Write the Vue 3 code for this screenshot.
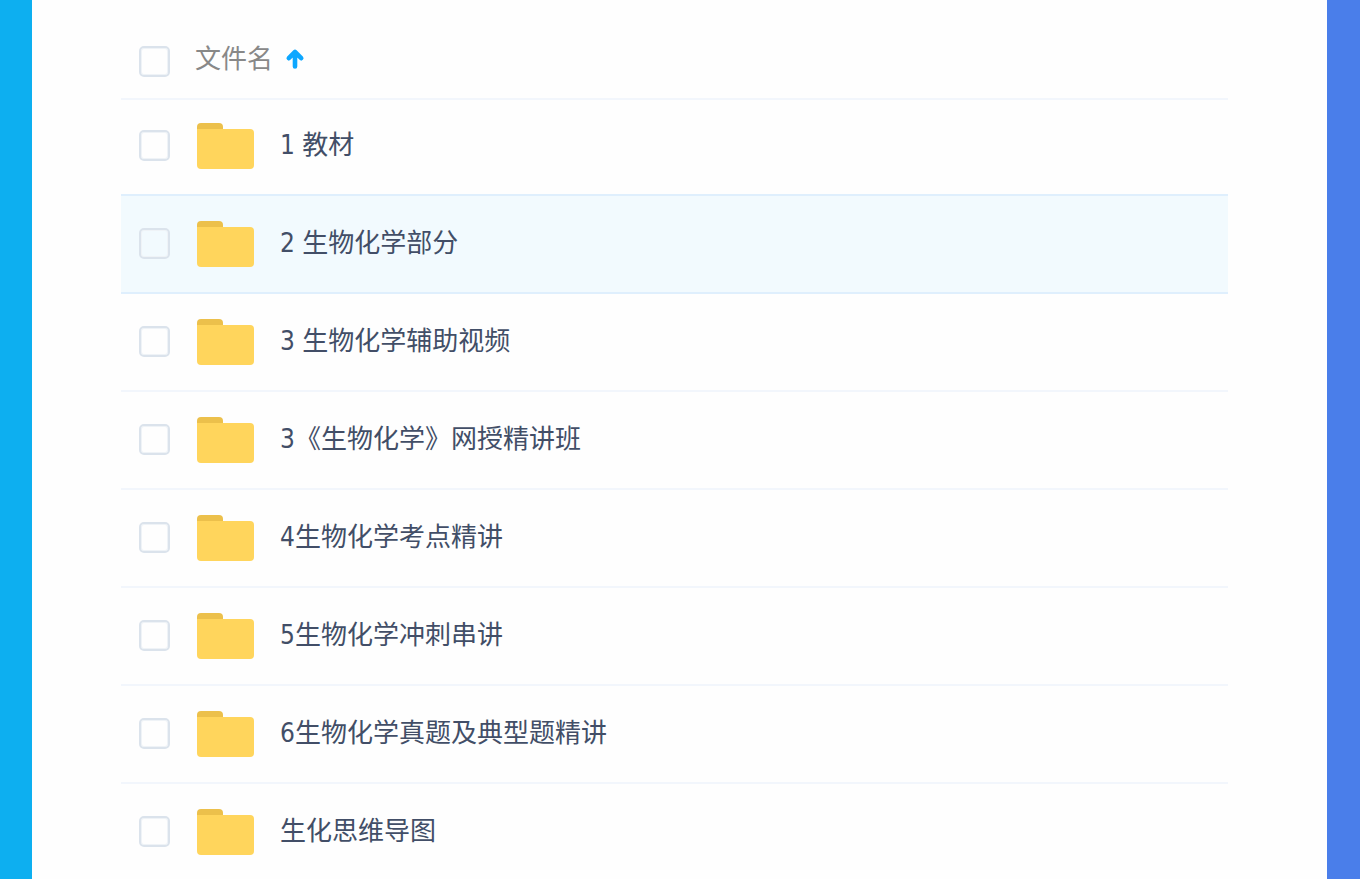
<template>
  <div class="page">
    <main class="panel">
      <div class="list-header">
        <input v-model="allChecked" type="checkbox" class="check" aria-label="全选" />
        <button type="button" class="sort-button" @click="ascending = !ascending">
          <span>文件名</span>
          <svg class="sort-arrow" :class="{ down: !ascending }" width="20" height="22" viewBox="0 0 20 22">
            <path d="M10 18.5V4.5M3.8 10.2L10 4l6.2 6.2" />
          </svg>
        </button>
      </div>

      <ul class="file-list">
        <li v-for="file in sortedFiles" :key="file.id" class="file-row" :class="{ active: file.id === activeId }">
          <input :id="'file-' + file.id" v-model="checked" :value="file.id" type="checkbox" class="check" />
          <svg class="folder" width="58" height="48" viewBox="0 0 58 48">
            <path class="folder-tab" d="M1 12V5q0-4 4-4h18q4 0 4 4v7z" />
            <rect class="folder-body" x="1" y="7" width="57" height="40" rx="4" />
            <path class="folder-body" d="M1 7h8v8H1z" />
          </svg>
          <label :for="'file-' + file.id" class="file-name">{{ file.name }}</label>
        </li>
      </ul>
    </main>
  </div>
</template>

<script setup>
import { ref, computed } from 'vue'

const files = [
  { id: 1, name: '1 教材' },
  { id: 2, name: '2 生物化学部分' },
  { id: 3, name: '3 生物化学辅助视频' },
  { id: 4, name: '3《生物化学》网授精讲班' },
  { id: 5, name: '4生物化学考点精讲' },
  { id: 6, name: '5生物化学冲刺串讲' },
  { id: 7, name: '6生物化学真题及典型题精讲' },
  { id: 8, name: '生化思维导图' }
]

const activeId = ref(2)
const checked = ref([])
const ascending = ref(true)

const sortedFiles = computed(() => (ascending.value ? files : [...files].reverse()))

const allChecked = computed({
  get: () => checked.value.length === files.length,
  set: (value) => {
    checked.value = value ? files.map((file) => file.id) : []
  }
})
</script>

<style>
body {
  margin: 0;
}
</style>

<style scoped>
* {
  box-sizing: border-box;
}

.page {
  height: 100vh;
  padding: 0 33px 0 32px;
  overflow: hidden;
  background: linear-gradient(90deg, #0daff0 50%, #4a7eea 50%);
  font-family: 'DejaVu Sans Condensed', 'Noto Sans CJK SC', sans-serif;
  font-size: 26px;
  line-height: 36px;
}

.panel {
  min-height: 100%;
  padding: 0 99px 0 89px;
  background: #fefefe;
}

.list-header {
  display: flex;
  align-items: center;
  gap: 25px;
  height: 100px;
  padding: 24px 18px 0;
  border-bottom: 2px solid #f2f6fc;
}

.sort-button {
  display: flex;
  align-items: center;
  gap: 12px;
  padding: 0 0 4px;
  border: none;
  background: none;
  color: #888888;
  font: inherit;
  cursor: pointer;
}

.sort-arrow {
  fill: none;
  stroke: #0da7ff;
  stroke-width: 4.6;
  stroke-linecap: round;
  stroke-linejoin: round;
}

.sort-arrow.down {
  transform: rotate(180deg);
}

/* first row overlaps the header line */
.file-list {
  margin: -2px 0 0;
  padding: 0;
  list-style: none;
}

.file-row {
  display: flex;
  align-items: center;
  height: 98px;
  padding: 0 18px 2px;
  border-bottom: 2px solid #f2f6fc;
}

.file-row.active {
  background: #f2fafe;
  border-bottom-color: #dfeffd;
  box-shadow: 0 -2px 0 #dfeffd;
}

.check {
  appearance: none;
  flex-shrink: 0;
  width: 31px;
  height: 31px;
  margin: 0;
  border: 2px solid #dbe3ec;
  border-radius: 5px;
  background: transparent;
  box-shadow: inset 0 0 0 1px #eff3f7;
  cursor: pointer;
}

.check:checked {
  background: #0da7ff;
  border-color: #0da7ff;
}

.folder {
  flex-shrink: 0;
  margin: 2px 26px 0;
}

.folder-tab {
  fill: #ecc04b;
}

.folder-body {
  fill: #ffd55c;
}

.file-name {
  color: #424e67;
  white-space: nowrap;
  cursor: pointer;
}
</style>
